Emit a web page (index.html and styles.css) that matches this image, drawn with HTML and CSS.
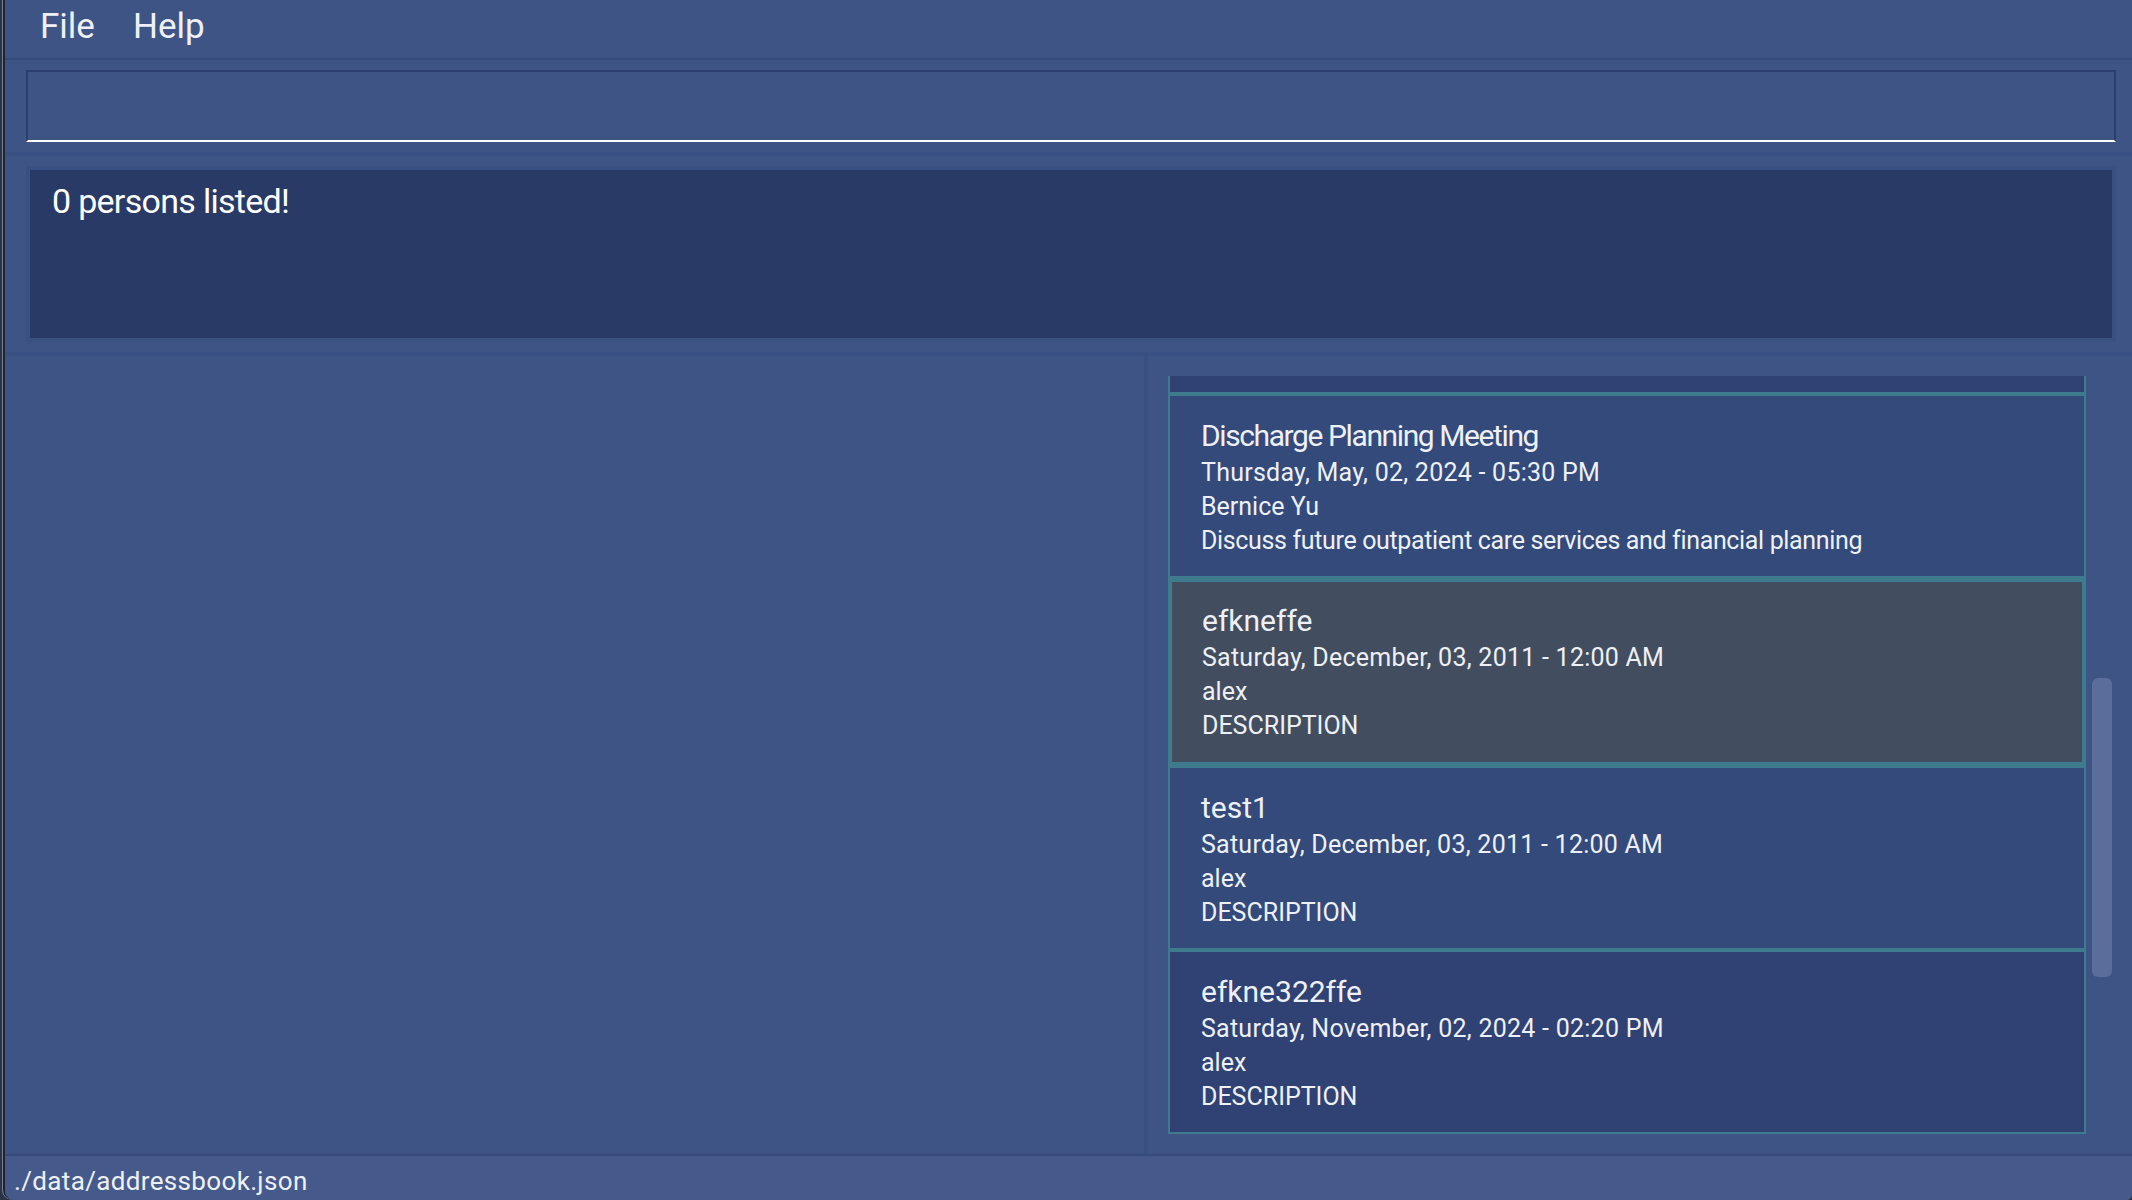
FILE: index.html
```html
<!DOCTYPE html>
<html lang="en">
<head>
<meta charset="utf-8">
<title>Address Book</title>
<link rel="stylesheet" href="styles.css">
</head>
<body>
<div class="window">
  <div class="menubar">
    <span class="menu-item">File</span>
    <span class="menu-item">Help</span>
  </div>
  <div class="command">
    <div class="command-input"></div>
  </div>
  <div class="divider-h"></div>
  <div class="result">
    <div class="result-box">0 persons listed!</div>
  </div>
  <div class="divider-h"></div>
  <div class="main">
    <div class="left-pane"></div>
    <div class="divider-v"></div>
    <div class="right-pane">
      <div class="list">
        <div class="card-tail even"></div>
        <div class="card odd">
          <div class="title tight">Discharge Planning Meeting</div>
          <div class="line date">Thursday, May, 02, 2024 - 05:30 PM</div>
          <div class="line">Bernice Yu</div>
          <div class="line desc">Discuss future outpatient care services and financial planning</div>
        </div>
        <div class="card selected">
          <div class="title">efkneffe</div>
          <div class="line date">Saturday, December, 03, 2011 - 12:00 AM</div>
          <div class="line">alex</div>
          <div class="line">DESCRIPTION</div>
        </div>
        <div class="card odd">
          <div class="title">test1</div>
          <div class="line date">Saturday, December, 03, 2011 - 12:00 AM</div>
          <div class="line">alex</div>
          <div class="line">DESCRIPTION</div>
        </div>
        <div class="card even">
          <div class="title">efkne322ffe</div>
          <div class="line date">Saturday, November, 02, 2024 - 02:20 PM</div>
          <div class="line">alex</div>
          <div class="line">DESCRIPTION</div>
        </div>
      </div>
      <div class="scrollbar"><div class="thumb"></div></div>
    </div>
  </div>
  <div class="status">./data/addressbook.json</div>
</div>
</body>
</html>
```
FILE: styles.css
```css
* { box-sizing: border-box; }
html, body { margin: 0; padding: 0; }
body {
  width: 2132px;
  height: 1200px;
  overflow: hidden;
  background: #2a3348;
  font-family: Roboto, "Noto Sans", "Liberation Sans", sans-serif;
  color: #eef0f6;
}
.window {
  margin-left: 3px;
  border-left: 2px solid #1d2333;
  box-shadow: -1px 0 0 #7a7f8c;
  height: 1200px;
  background: #3d5485;
  display: flex;
  flex-direction: column;
  border-bottom-left-radius: 10px;
  border-bottom-right-radius: 6px;
  overflow: hidden;
}
.menubar {
  height: 60px;
  flex: none;
  border-bottom: 2px solid #364b7a;
  display: flex;
  align-items: flex-start;
  gap: 38px;
  padding-left: 35px;
  padding-top: 4px;
  font-size: 35px;
  line-height: 46px;
}
.menu-item { color: #eef0f6; }
.command {
  flex: none;
  height: 92px;
  padding: 10px 16px 10px 21px;
}
.command-input {
  height: 72px;
  border: 2px solid #2c3e6d;
  border-bottom: 2px solid #ffffff;
  background: #3d5485;
}
.divider-h {
  flex: none;
  height: 4px;
  background: #385082;
}
.result {
  flex: none;
  height: 196px;
  padding: 10px 16px 10px 21px;
}
.result-box {
  height: 176px;
  border: 4px solid #385082;
  background: #293a66;
  padding: 11px 22px;
  font-size: 34px;
  line-height: 40px;
  letter-spacing: -0.7px;
  color: #ffffff;
}
.main {
  flex: 1;
  display: flex;
  min-height: 0;
  border-bottom: 2px solid #364b7a;
}
.left-pane {
  width: 1139px;
  flex: none;
}
.divider-v {
  width: 4px;
  flex: none;
  background: #385082;
}
.right-pane {
  flex: 1;
  display: flex;
  align-items: flex-start;
  padding: 20px;
  gap: 6px;
}
.list {
  width: 918px;
  height: 758px;
  flex: none;
  overflow: hidden;
  background: #3e7b8e;
  display: flex;
  flex-direction: column;
  gap: 4px;
  padding: 0 2px 2px 2px;
}
.card-tail {
  flex: none;
  height: 16px;
}
.card {
  flex: none;
  height: 180px;
  padding: 19px 0 0 31px;
}
.odd { background: #334a7b; }
.even { background: #2f4273; }
.card.selected {
  height: 184px;
  background: #424e5f;
  border: 2px solid #3e7b8e;
  padding: 18px 0 0 30px;
}
.title {
  font-size: 30px;
  line-height: 41px;
  color: #eef0f6;
  white-space: nowrap;
}
.title.tight { letter-spacing: -1.4px; }
.line {
  font-size: 25px;
  line-height: 34px;
  color: #eef0f6;
  white-space: nowrap;
}
.line.date { letter-spacing: 0.25px; }
.line.desc { letter-spacing: -0.35px; }
.scrollbar {
  width: 20px;
  height: 758px;
  flex: none;
  padding-top: 302px;
}
.thumb {
  width: 20px;
  height: 299px;
  border-radius: 6px;
  background: #5a6d9b;
}
.status {
  flex: none;
  height: 44px;
  background: #455a8b;
  padding: 6px 0 0 9px;
  font-size: 26px;
  line-height: 38px;
  letter-spacing: 0.35px;
  color: #eef0f6;
}
```
